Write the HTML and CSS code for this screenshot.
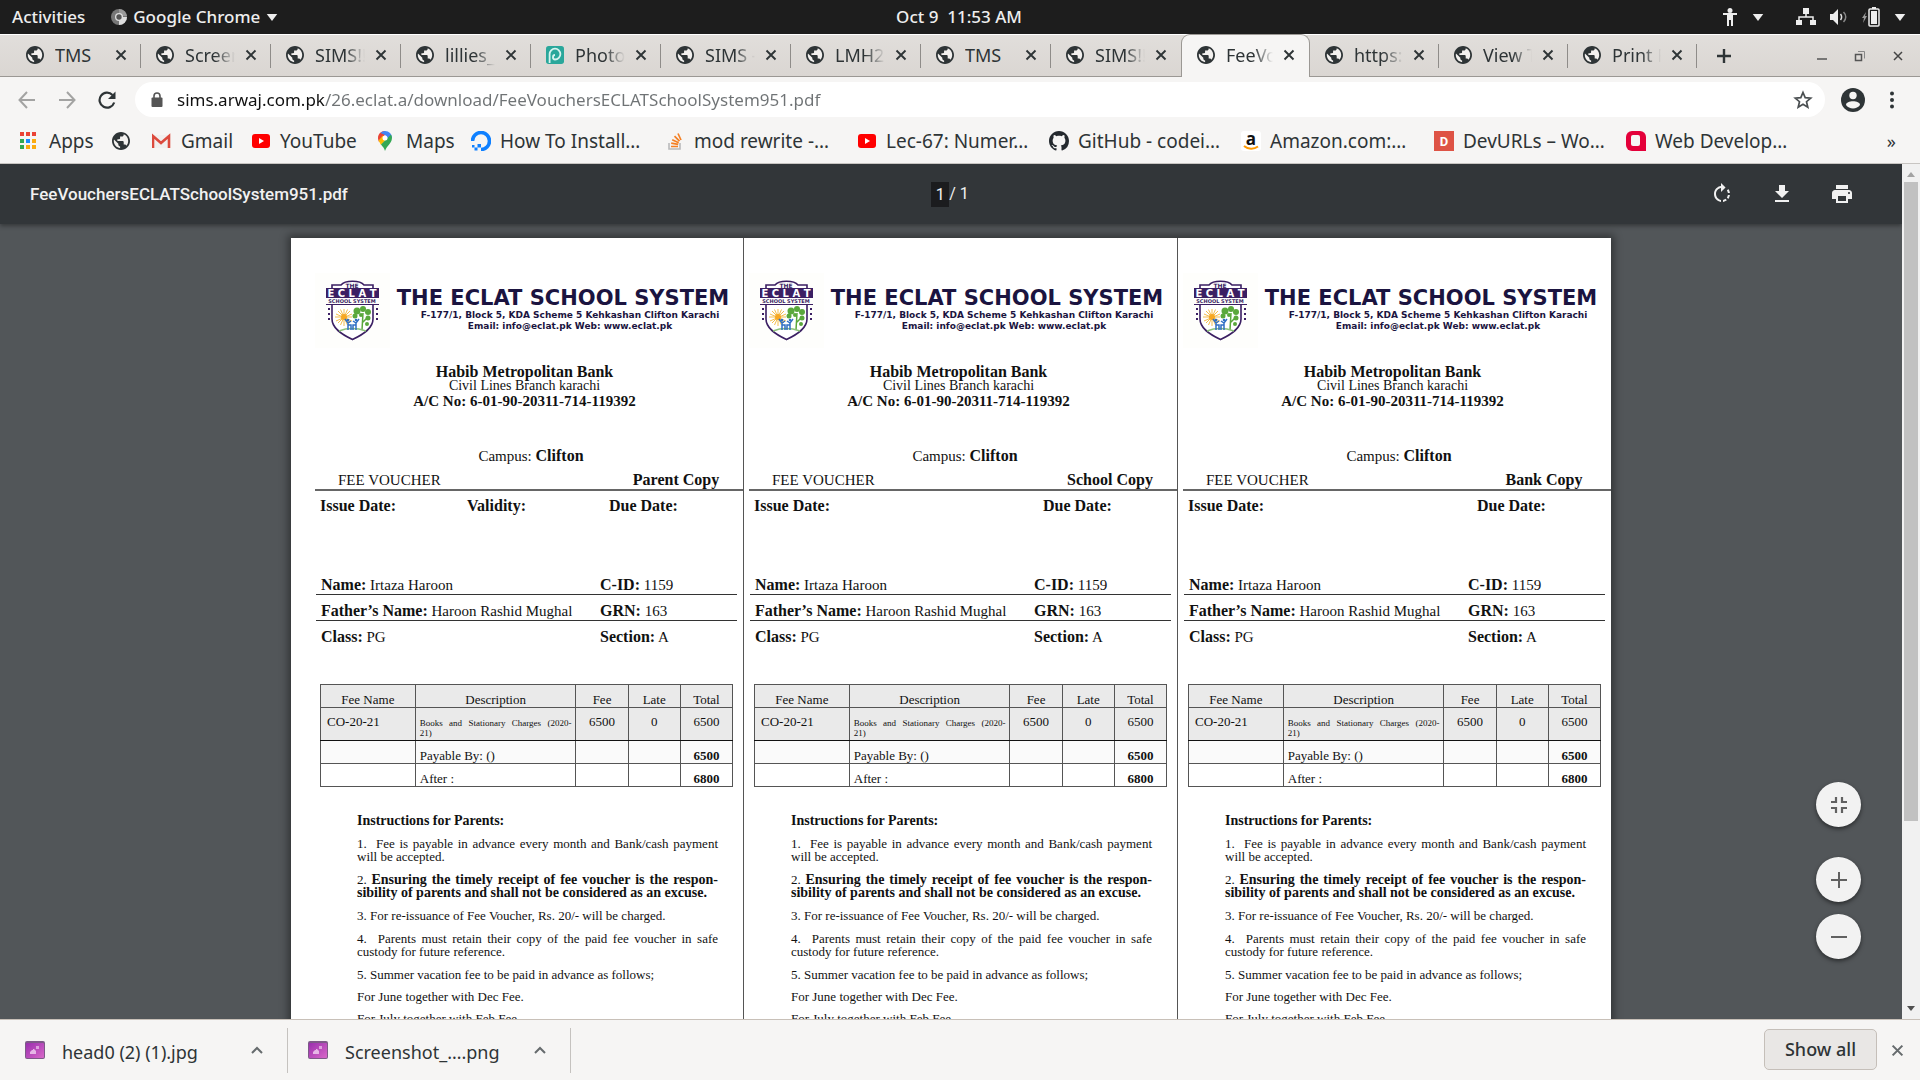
FILE: index.html
```html
<!DOCTYPE html>
<html lang="en">
<head>
<meta charset="utf-8">
<title>FeeVouchersECLATSchoolSystem951.pdf</title>
<link rel="stylesheet" href="styles.css">
</head>
<body>
<svg class="sprite" aria-hidden="true">
  <symbol id="globe" viewBox="2 2 20 20"><circle cx="12" cy="12" r="9" fill="#f3f1ef"/><path fill="#2e3436" d="M12 2C6.480 2 2 6.480 2 12s4.480 10 10 10 10-4.480 10-10S17.520 2 12 2zm-1 17.930c-3.950-.49-7-3.850-7-7.930 0-.62.080-1.210.21-1.790L9 15v1c0 1.100.9 2 2 2v1.930zm6.900-2.540c-.26-.81-1-1.390-1.900-1.390h-1v-3c0-.55-.45-1-1-1H8v-2h2c.55 0 1-.45 1-1V7h2c1.100 0 2-.9 2-2v-.41c2.930 1.190 5 4.060 5 7.410 0 2.080-.8 3.970-2.100 5.390z"/></symbol>
  <symbol id="close" viewBox="0 0 12 12"><path d="M1.500 1.500l9 9m0-9l-9 9" fill="none" stroke="currentColor" stroke-width="1.900"/></symbol>
  <symbol id="caret" viewBox="0 0 12 8"><path d="M0 0h12L6 8z" fill="currentColor"/></symbol>
  <symbol id="chevron" viewBox="0 0 12 8"><path d="M1 7l5-5 5 5" fill="none" stroke="#666b6d" stroke-width="2"/></symbol>
  <symbol id="youtube" viewBox="0 0 20 20"><rect x="1" y="3" width="18" height="14" rx="3" fill="#f00"/><path d="M8 7l5 3-5 3z" fill="#fff"/></symbol>
  <symbol id="image-file" viewBox="0 0 20 20"><defs><linearGradient id="pink" x1="0" x2="1" y1="0" y2="1"><stop offset="0" stop-color="#9a2fae"/><stop offset="1" stop-color="#d868c8"/></linearGradient></defs><rect width="20" height="18" y="1" rx="2" fill="#7d5a88"/><rect x="1" y="3" width="18" height="15" rx="1" fill="url(#pink)"/><path d="M5 14v-2l2-2h1v-1h1l2 2v3z" fill="#e6b6e6"/><path d="M11 6h3v3h-3z" fill="#e6b6e6" opacity=".8"/></symbol>
  <symbol id="crest" viewBox="0 0 75 75">
    <rect width="75" height="75" fill="#fefefc"/>
    <path d="M17 31v15c0 9 9 15 20.500 20.500C49 61 58 55 58 46V31" fill="#fff" stroke="#3b1f63" stroke-width="1.600"/>
    <path d="M17 15v-3h9c4-5 19-5 23 0h9v3" fill="#fff" stroke="#3b1f63" stroke-width="1.600"/>
    <rect x="11" y="15" width="53" height="10" fill="#3b1f63"/>
    <path d="M11 31.500h53" stroke="#3b1f63"/>
    <path d="M14 35v12M62 35v12" stroke="#3b1f63" stroke-width="2" stroke-dasharray="2 3"/>
    <g stroke="#f2b53a" stroke-width=".9"><path d="M29 36v17M20 44h17M23 38l12 12M35 38L23 50M25.500 36.500l7 15.500M32.500 36.500l-7 15.500M21 41l16 7M37 41l-16 7"/></g>
    <circle cx="29" cy="44" r="3" fill="#f7a823"/>
    <g fill="#5aa83c"><circle cx="42" cy="38" r="3.500"/><circle cx="48" cy="36" r="3"/><circle cx="53" cy="39" r="3"/><circle cx="40" cy="43" r="2.500"/><circle cx="53" cy="45" r="2.500"/><circle cx="46" cy="42" r="2"/><circle cx="52" cy="51" r="2"/></g>
    <path d="M48 40l-1 17M47 50l5-5" stroke="#5aa83c" stroke-width="1.500" fill="none"/>
    <path d="M24 58c8-3 18-3 27 0" stroke="#8cc27a" stroke-width="1.500" fill="none"/>
    <g stroke="#2f6fc4" stroke-width="1.500" fill="none"><path d="M30 46l3 4 3-2M33 50v7M36 57v-5h-3M38 48l3 2 3-4M41 50v7M38 57v-5h3"/></g>
    <g fill="#2f6fc4"><circle cx="33" cy="47" r="1.300"/><circle cx="41" cy="47" r="1.300"/></g>
  </symbol>
</svg>

<header class="topbar">
  <div class="topbar-left">
    <button class="plain">Activities</button>
    <button class="plain app-menu">
      <svg width="16" height="18" viewBox="0 0 18 18"><circle cx="9" cy="9" r="9" fill="#777"/><path d="M9 9h9a9 9 0 0 1-9 9z" fill="#ddd"/><path d="M9 0a9 9 0 0 1 9 8H9z" fill="#999"/><circle cx="9" cy="9" r="4.500" fill="#ddd"/><circle cx="9" cy="9" r="3" fill="#555"/></svg>
      Google Chrome <svg width="12" height="7"><use href="#caret"/></svg>
    </button>
  </div>
  <button class="plain clock">Oct 9&nbsp; 11:53 AM</button>
  <div class="topbar-right">
    <button class="plain" aria-label="Accessibility"><svg width="16" height="18" viewBox="0 0 16 18" fill="#eee"><circle cx="8" cy="2.500" r="2.500"/><path d="M1 5h14v2h-4v11H9v-6H7v6H5V7H1z"/></svg><svg width="12" height="7"><use href="#caret"/></svg></button>
    <button class="plain status" aria-label="System menu">
      <svg width="20" height="18" viewBox="0 0 20 18" fill="#eee"><path d="M7 0h6v6H7zM0 12h6v5H0zM14 12h6v5h-6z"/><path d="M10 5v4M3 13V9h14v4" fill="none" stroke="#eee" stroke-width="1.500"/></svg>
      <svg width="18" height="18" viewBox="0 0 18 18"><path d="M0 6h3l5-5v16l-5-5H0z" fill="#eee"/><path d="M10.500 6c1.500 2 1.500 4 0 6" fill="none" stroke="#ddd" stroke-width="1.500"/><path d="M13.500 4c3 3 3 7 0 10" fill="none" stroke="#888" stroke-width="1.500"/></svg>
      <svg width="18" height="20" viewBox="0 0 18 20"><path d="M4 5L0 11h2l-1 5 4-7H3z" fill="#999"/><path d="M10 0h4v2h-4z" fill="#eee"/><rect x="7" y="2" width="10" height="17" rx="1" fill="none" stroke="#eee" stroke-width="1.500"/><path d="M9 4h6v13H9z" fill="#eee"/></svg>
      <svg width="12" height="7"><use href="#caret"/></svg>
    </button>
  </div>
</header>

<nav class="tabs" aria-label="Tabs">
  <div class="tab"><svg class="fav"><use href="#globe"/></svg><button class="tab-title">TMS</button><button class="tab-close" aria-label="Close"><svg><use href="#close"/></svg></button></div>
  <div class="tab"><svg class="fav"><use href="#globe"/></svg><button class="tab-title">Screen</button><button class="tab-close" aria-label="Close"><svg><use href="#close"/></svg></button></div>
  <div class="tab"><svg class="fav"><use href="#globe"/></svg><button class="tab-title">SIMS!!</button><button class="tab-close" aria-label="Close"><svg><use href="#close"/></svg></button></div>
  <div class="tab"><svg class="fav"><use href="#globe"/></svg><button class="tab-title">lillies_</button><button class="tab-close" aria-label="Close"><svg><use href="#close"/></svg></button></div>
  <div class="tab"><svg class="fav" viewBox="0 0 20 20"><rect width="20" height="20" rx="3" fill="#2aa79b"/><path d="M4 19V9a6 6 0 1 1 6 6c-3 0-3-5 0-5" fill="none" stroke="#d8f3ef" stroke-width="2"/></svg><button class="tab-title">Photo</button><button class="tab-close" aria-label="Close"><svg><use href="#close"/></svg></button></div>
  <div class="tab"><svg class="fav"><use href="#globe"/></svg><button class="tab-title">SIMS -</button><button class="tab-close" aria-label="Close"><svg><use href="#close"/></svg></button></div>
  <div class="tab"><svg class="fav"><use href="#globe"/></svg><button class="tab-title">LMH2</button><button class="tab-close" aria-label="Close"><svg><use href="#close"/></svg></button></div>
  <div class="tab"><svg class="fav"><use href="#globe"/></svg><button class="tab-title">TMS</button><button class="tab-close" aria-label="Close"><svg><use href="#close"/></svg></button></div>
  <div class="tab before-active"><svg class="fav"><use href="#globe"/></svg><button class="tab-title">SIMS!!</button><button class="tab-close" aria-label="Close"><svg><use href="#close"/></svg></button></div>
  <div class="tab active"><svg class="fav"><use href="#globe"/></svg><button class="tab-title">FeeVo</button><button class="tab-close" aria-label="Close"><svg><use href="#close"/></svg></button></div>
  <div class="tab"><svg class="fav"><use href="#globe"/></svg><button class="tab-title">https:</button><button class="tab-close" aria-label="Close"><svg><use href="#close"/></svg></button></div>
  <div class="tab"><svg class="fav"><use href="#globe"/></svg><button class="tab-title">View T</button><button class="tab-close" aria-label="Close"><svg><use href="#close"/></svg></button></div>
  <div class="tab"><svg class="fav"><use href="#globe"/></svg><button class="tab-title">Print F</button><button class="tab-close" aria-label="Close"><svg><use href="#close"/></svg></button></div>
  <button class="plain new-tab" aria-label="New tab"><svg width="16" height="16" viewBox="0 0 16 16"><path d="M8 1v14M1 8h14" stroke="#2e3436" stroke-width="2.400"/></svg></button>
  <div class="window-buttons">
    <button class="plain" aria-label="Minimize"><svg width="12" height="12"><path d="M1 9h10" stroke="#555" stroke-width="1.500"/></svg></button>
    <button class="plain" aria-label="Restore"><svg width="12" height="12" fill="none" stroke="#555"><path d="M1.500 4.500h6v6h-6z" stroke-width="1.500"/><path d="M4 1.500h6.500v7" stroke="#888"/></svg></button>
    <button class="plain" aria-label="Close window"><svg width="12" height="12" viewBox="0 0 12 12"><path d="M2 2l8 8m0-8l-8 8" stroke="#444" stroke-width="1.500"/></svg></button>
  </div>
</nav>

<div class="toolbar">
  <button class="plain nav-btn" aria-label="Back"><svg width="18" height="18" viewBox="0 0 18 18"><path d="M17 9H2M9 1L1.500 9 9 17" fill="none" stroke="#a3a3a2" stroke-width="2"/></svg></button>
  <button class="plain nav-btn" aria-label="Forward"><svg width="18" height="18" viewBox="0 0 18 18"><path d="M1 9h15M9 1l7.500 8L9 17" fill="none" stroke="#a3a3a2" stroke-width="2"/></svg></button>
  <button class="plain nav-btn" aria-label="Reload"><svg width="18" height="18" viewBox="0 0 18 18"><path d="M16.200 11.500A7.500 7.500 0 1 1 14.500 4" fill="none" stroke="#2e3436" stroke-width="2.200"/><path d="M17.500.5V8H10z" fill="#2e3436"/></svg></button>
  <div class="omnibox">
    <svg width="12" height="16" viewBox="0 0 12 16"><path d="M3 7V4a3 3 0 0 1 6 0v3" fill="none" stroke="#555" stroke-width="1.600"/><rect x=".5" y="5.500" width="11" height="9.500" rx="1" fill="#555"/></svg>
    <input class="url" type="text" aria-label="Address" value="sims.arwaj.com.pk/26.eclat.a/download/FeeVouchersECLATSchoolSystem951.pdf">
    <button class="plain" aria-label="Bookmark this page"><svg width="20" height="20" viewBox="0 0 20 20"><path d="M10 2.500l2.200 5.200 5.500.4-4.200 3.600 1.300 5.500-4.800-3-4.800 3 1.300-5.500L2.300 8.100l5.500-.4z" fill="none" stroke="#4a4f51" stroke-width="1.700"/></svg></button>
  </div>
  <button class="plain" aria-label="Profile"><svg width="24" height="24" viewBox="0 0 24 24"><circle cx="12" cy="12" r="12" fill="#2e3436"/><circle cx="12" cy="7.500" r="3.700" fill="#f6f5f4"/><path d="M5 17c0-5 14-5 14 0-3 4.500-11 4.500-14 0z" fill="#f6f5f4"/></svg></button>
  <button class="plain menu-btn" aria-label="Menu"><svg width="6" height="18" viewBox="0 0 6 18" fill="#2e3436"><circle cx="3" cy="2.500" r="2"/><circle cx="3" cy="9" r="2"/><circle cx="3" cy="15.500" r="2"/></svg></button>
</div>

<nav class="bookmarks" aria-label="Bookmarks">
  <a href="#"><svg viewBox="0 0 20 20"><path fill="#ea4335" d="M0 1h4v4H0zM6 1h4v4H6zM12 1h4v4h-4z"/><path fill="#34a853" d="M0 8h4v4H0zM0 14h4v4H0z"/><path fill="#1a8cff" d="M6 8h4v4H6z"/><path fill="#fbab10" d="M12 8h4v4h-4zM6 14h4v4H6zM12 14h4v4h-4z"/></svg>Apps</a>
  <a href="#" aria-label="Bookmark"><svg class="fav"><use href="#globe"/></svg></a>
  <a href="#"><svg viewBox="0 0 20 20"><path d="M1 4h16v13H1z" fill="#f1efee"/><path d="M1 17V5l8 7 8-7v12" fill="none" stroke="#dc4a3d" stroke-width="2.600"/></svg>Gmail</a>
  <a href="#"><svg><use href="#youtube"/></svg>YouTube</a>
  <a href="#"><svg viewBox="0 0 20 20"><path d="M8 0C4 0 1 3 1 7c0 1.500.5 2.700 1 4l6-7z" fill="#ea4335"/><path d="M3.500 2C5 .5 7 0 8 0c4 0 7 3 7 7l-4 1-3-4z" fill="#4285f4"/><path d="M1.600 9.500l4.200-5L8 9.500l-4 4.500z" fill="#fbbc04"/><path d="M14 3.500c2 4 .5 7-1.500 9.500S9 17 8 20c-.8-3-2-4-4-6.500z" fill="#34a853"/><circle cx="8" cy="7" r="2.500" fill="#fff"/></svg>Maps</a>
  <a href="#"><svg viewBox="0 0 20 20"><path d="M1.500 10a8.500 8.500 0 1 1 8.500 8.500" fill="none" stroke="#0f80ff" stroke-width="3.600"/><path d="M6.500 13H10v3.500H6.500zM3.500 16.500h3v3h-3zM1 14h2.500v2.500H1z" fill="#0f80ff"/></svg>How To Install…</a>
  <a href="#"><svg viewBox="0 0 20 20"><path d="M4 12v6h11v-6" fill="none" stroke="#b9babb" stroke-width="1.600"/><path d="M6 15.500h7M6.200 12.200l7 1.200M7.200 8.700l6.500 3M9.500 5.200l5 5M13 2.500l3 6.500" stroke="#f48024" stroke-width="1.700"/></svg>mod rewrite -…</a>
  <a href="#"><svg><use href="#youtube"/></svg>Lec-67: Numer…</a>
  <a href="#"><svg viewBox="0 0 16 16"><path fill="#24292e" d="M8 0C3.580 0 0 3.580 0 8c0 3.540 2.290 6.530 5.470 7.590.4.070.55-.17.55-.38 0-.19-.01-.82-.01-1.490-2.010.37-2.530-.49-2.690-.94-.09-.23-.48-.94-.82-1.130-.28-.15-.68-.52-.01-.53.63-.01 1.080.58 1.230.82.72 1.210 1.870.87 2.330.66.070-.52.28-.87.51-1.070-1.780-.2-3.640-.89-3.640-3.950 0-.87.31-1.590.82-2.150-.08-.2-.36-1.020.08-2.120 0 0 .67-.21 2.200.82.64-.18 1.320-.27 2-.27s1.360.09 2 .27c1.530-1.040 2.200-.82 2.200-.82.44 1.100.16 1.920.08 2.120.51.56.82 1.270.82 2.150 0 3.070-1.870 3.750-3.650 3.950.29.25.54.73.54 1.480 0 1.070-.01 1.930-.01 2.200 0 .21.15.46.55.38A8.010 8.010 0 0 0 16 8c0-4.420-3.580-8-8-8z"/></svg>GitHub - codei…</a>
  <a href="#"><svg viewBox="0 0 20 20"><rect width="20" height="20" rx="3" fill="#fff"/><text x="10" y="14" text-anchor="middle" class="amazon-a">a</text><path d="M3 15c4 3.500 10 3.500 14 .5" fill="none" stroke="#ff9900" stroke-width="2"/></svg>Amazon.com:…</a>
  <a href="#"><svg viewBox="0 0 20 20"><rect width="20" height="20" fill="#de5345"/><text x="10" y="15" text-anchor="middle" class="dev-d">D</text></svg>DevURLs – Wo…</a>
  <a href="#"><svg viewBox="0 0 20 20"><path d="M6 0h8a6 6 0 0 1 6 6v14H6a6 6 0 0 1-6-6V6a6 6 0 0 1 6-6z" fill="#e4003a"/><rect x="5" y="4" width="9" height="11" rx="2" fill="#f6f5f4"/></svg>Web Develop…</a>
  <button class="plain more" aria-label="More bookmarks">»</button>
</nav>

<main class="viewer">
  <div class="pdf">
    <div class="pdf-bar">
      <h1>FeeVouchersECLATSchoolSystem951.pdf</h1>
      <div class="pages"><input type="text" value="1" aria-label="Page number"><span>/ 1</span></div>
      <div class="pdf-actions">
        <button class="plain" aria-label="Rotate"><svg width="24" height="24" viewBox="0 0 24 24" fill="#f1f1f1"><path d="M15.550 5.550L11 1v3.070C7.060 4.560 4 7.920 4 12s3.050 7.440 7 7.930v-2.020c-2.840-.48-5-2.940-5-5.910s2.160-5.430 5-5.910V10l4.550-4.450zM19.930 11c-.17-1.390-.72-2.730-1.620-3.890l-1.420 1.420c.54.75.88 1.600 1.020 2.470h2.020zM13 17.900v2.020c1.390-.17 2.740-.71 3.900-1.610l-1.440-1.440c-.75.54-1.590.89-2.460 1.030zm3.890-2.420l1.420 1.410c.9-1.160 1.450-2.500 1.620-3.890h-2.020c-.14.87-.48 1.720-1.020 2.480z"/></svg></button>
        <button class="plain" aria-label="Download"><svg width="24" height="24" viewBox="0 0 24 24" fill="#f1f1f1"><path d="M19 9h-4V3H9v6H5l7 7 7-7zM5 18v2h14v-2H5z"/></svg></button>
        <button class="plain" aria-label="Print"><svg width="24" height="24" viewBox="0 0 24 24" fill="#f1f1f1"><path d="M19 8H5c-1.660 0-3 1.340-3 3v6h4v4h12v-4h4v-6c0-1.660-1.340-3-3-3zm-3 11H8v-5h8v5zm3-7c-.55 0-1-.45-1-1s.45-1 1-1 1 .45 1 1-.45 1-1 1zm-1-9H6v4h12V3z"/></svg></button>
      </div>
    </div>

    <div class="paper">
      <article class="voucher">
        <header class="school"><svg class="crest" viewBox="0 0 75 75"><use href="#crest"/><text x="37" y="15" text-anchor="middle" class="crest-the">THE</text><text x="37" y="24" text-anchor="middle" class="crest-name">E C L A T</text><text x="37" y="30" text-anchor="middle" class="crest-sub">SCHOOL SYSTEM</text></svg><div class="school-text"><h2>THE ECLAT SCHOOL SYSTEM</h2><p>F-177/1, Block 5, KDA Scheme 5 Kehkashan Clifton Karachi<br>Email: info@eclat.pk Web: www.eclat.pk</p></div></header>
        <div class="bank"><b class="bank-name">Habib Metropolitan Bank</b><span>Civil Lines Branch karachi</span><b>A/C No: 6-01-90-20311-714-119392</b></div>
        <p class="campus">Campus: <b>Clifton</b></p>
        <div class="copy"><span>FEE VOUCHER</span><b>Parent Copy</b></div>
        <div class="dates"><b>Issue Date:</b><b>Validity:</b><b>Due Date:</b></div>
        <div class="student"><p><span><b>Name:</b> Irtaza Haroon</span><span><b>C-ID:</b> 1159</span></p><p><span><b>Father’s Name:</b> Haroon Rashid Mughal</span><span><b>GRN:</b> 163</span></p><p><span><b>Class:</b> PG</span><span><b>Section:</b> A</span></p></div>
        <table>
          <thead><tr><th>Fee Name</th><th>Description</th><th>Fee</th><th>Late</th><th>Total</th></tr></thead>
          <tbody>
            <tr class="fee"><td>CO-20-21</td><td><span class="stretch">Books and Stationary Charges (2020-</span>21)</td><td>6500</td><td>0</td><td>6500</td></tr>
            <tr class="due"><td></td><td>Payable By: ()</td><td></td><td></td><td>6500</td></tr>
            <tr class="late"><td></td><td>After :</td><td></td><td></td><td>6800</td></tr>
          </tbody>
        </table>
        <section class="notes">
          <h3>Instructions for Parents:</h3>
          <p><span class="stretch">1.&nbsp; Fee is payable in advance every month and Bank/cash payment</span>will be accepted.</p>
          <p><span class="stretch">2. <b>Ensuring the timely receipt of fee voucher is the respon-</b></span><b>sibility of parents and shall not be considered as an excuse.</b></p>
          <p>3. For re-issuance of Fee Voucher, Rs. 20/- will be charged.</p>
          <p><span class="stretch">4.&nbsp; Parents must retain their copy of the paid fee voucher in safe</span>custody for future reference.</p>
          <p>5. Summer vacation fee to be paid in advance as follows;</p>
          <p>For June together with Dec Fee.</p>
          <p>For July together with Feb Fee.</p>
        </section>
      </article>

      <article class="voucher">
        <header class="school"><svg class="crest" viewBox="0 0 75 75"><use href="#crest"/><text x="37" y="15" text-anchor="middle" class="crest-the">THE</text><text x="37" y="24" text-anchor="middle" class="crest-name">E C L A T</text><text x="37" y="30" text-anchor="middle" class="crest-sub">SCHOOL SYSTEM</text></svg><div class="school-text"><h2>THE ECLAT SCHOOL SYSTEM</h2><p>F-177/1, Block 5, KDA Scheme 5 Kehkashan Clifton Karachi<br>Email: info@eclat.pk Web: www.eclat.pk</p></div></header>
        <div class="bank"><b class="bank-name">Habib Metropolitan Bank</b><span>Civil Lines Branch karachi</span><b>A/C No: 6-01-90-20311-714-119392</b></div>
        <p class="campus">Campus: <b>Clifton</b></p>
        <div class="copy"><span>FEE VOUCHER</span><b>School Copy</b></div>
        <div class="dates"><b>Issue Date:</b><b></b><b>Due Date:</b></div>
        <div class="student"><p><span><b>Name:</b> Irtaza Haroon</span><span><b>C-ID:</b> 1159</span></p><p><span><b>Father’s Name:</b> Haroon Rashid Mughal</span><span><b>GRN:</b> 163</span></p><p><span><b>Class:</b> PG</span><span><b>Section:</b> A</span></p></div>
        <table>
          <thead><tr><th>Fee Name</th><th>Description</th><th>Fee</th><th>Late</th><th>Total</th></tr></thead>
          <tbody>
            <tr class="fee"><td>CO-20-21</td><td><span class="stretch">Books and Stationary Charges (2020-</span>21)</td><td>6500</td><td>0</td><td>6500</td></tr>
            <tr class="due"><td></td><td>Payable By: ()</td><td></td><td></td><td>6500</td></tr>
            <tr class="late"><td></td><td>After :</td><td></td><td></td><td>6800</td></tr>
          </tbody>
        </table>
        <section class="notes">
          <h3>Instructions for Parents:</h3>
          <p><span class="stretch">1.&nbsp; Fee is payable in advance every month and Bank/cash payment</span>will be accepted.</p>
          <p><span class="stretch">2. <b>Ensuring the timely receipt of fee voucher is the respon-</b></span><b>sibility of parents and shall not be considered as an excuse.</b></p>
          <p>3. For re-issuance of Fee Voucher, Rs. 20/- will be charged.</p>
          <p><span class="stretch">4.&nbsp; Parents must retain their copy of the paid fee voucher in safe</span>custody for future reference.</p>
          <p>5. Summer vacation fee to be paid in advance as follows;</p>
          <p>For June together with Dec Fee.</p>
          <p>For July together with Feb Fee.</p>
        </section>
      </article>

      <article class="voucher">
        <header class="school"><svg class="crest" viewBox="0 0 75 75"><use href="#crest"/><text x="37" y="15" text-anchor="middle" class="crest-the">THE</text><text x="37" y="24" text-anchor="middle" class="crest-name">E C L A T</text><text x="37" y="30" text-anchor="middle" class="crest-sub">SCHOOL SYSTEM</text></svg><div class="school-text"><h2>THE ECLAT SCHOOL SYSTEM</h2><p>F-177/1, Block 5, KDA Scheme 5 Kehkashan Clifton Karachi<br>Email: info@eclat.pk Web: www.eclat.pk</p></div></header>
        <div class="bank"><b class="bank-name">Habib Metropolitan Bank</b><span>Civil Lines Branch karachi</span><b>A/C No: 6-01-90-20311-714-119392</b></div>
        <p class="campus">Campus: <b>Clifton</b></p>
        <div class="copy"><span>FEE VOUCHER</span><b>Bank Copy</b></div>
        <div class="dates"><b>Issue Date:</b><b></b><b>Due Date:</b></div>
        <div class="student"><p><span><b>Name:</b> Irtaza Haroon</span><span><b>C-ID:</b> 1159</span></p><p><span><b>Father’s Name:</b> Haroon Rashid Mughal</span><span><b>GRN:</b> 163</span></p><p><span><b>Class:</b> PG</span><span><b>Section:</b> A</span></p></div>
        <table>
          <thead><tr><th>Fee Name</th><th>Description</th><th>Fee</th><th>Late</th><th>Total</th></tr></thead>
          <tbody>
            <tr class="fee"><td>CO-20-21</td><td><span class="stretch">Books and Stationary Charges (2020-</span>21)</td><td>6500</td><td>0</td><td>6500</td></tr>
            <tr class="due"><td></td><td>Payable By: ()</td><td></td><td></td><td>6500</td></tr>
            <tr class="late"><td></td><td>After :</td><td></td><td></td><td>6800</td></tr>
          </tbody>
        </table>
        <section class="notes">
          <h3>Instructions for Parents:</h3>
          <p><span class="stretch">1.&nbsp; Fee is payable in advance every month and Bank/cash payment</span>will be accepted.</p>
          <p><span class="stretch">2. <b>Ensuring the timely receipt of fee voucher is the respon-</b></span><b>sibility of parents and shall not be considered as an excuse.</b></p>
          <p>3. For re-issuance of Fee Voucher, Rs. 20/- will be charged.</p>
          <p><span class="stretch">4.&nbsp; Parents must retain their copy of the paid fee voucher in safe</span>custody for future reference.</p>
          <p>5. Summer vacation fee to be paid in advance as follows;</p>
          <p>For June together with Dec Fee.</p>
          <p>For July together with Feb Fee.</p>
        </section>
      </article>
    </div>

    <div class="zoom">
      <button class="fit" aria-label="Fit to page"><svg width="16" height="16" viewBox="0 0 16 16"><path d="M5 0v5H0M11 0v5h5M5 16v-5H0M11 16v-5h5" fill="none" stroke="#616161" stroke-width="2.200"/></svg></button>
      <button aria-label="Zoom in"><svg width="16" height="16" viewBox="0 0 16 16"><path d="M8 0v16M0 8h16" stroke="#616161" stroke-width="2"/></svg></button>
      <button aria-label="Zoom out"><svg width="16" height="16" viewBox="0 0 16 16"><path d="M0 8h16" stroke="#616161" stroke-width="2"/></svg></button>
    </div>
  </div>
  <div class="scrollbar">
    <svg width="8" height="5" viewBox="0 0 8 5"><path d="M4 0l4 5H0z" fill="#a3a3a3"/></svg>
    <div class="track"><div class="thumb"></div></div>
    <svg width="8" height="5" viewBox="0 0 8 5"><path d="M0 0h8L4 5z" fill="#505050"/></svg>
  </div>
</main>

<footer class="downloads">
  <div class="download"><svg class="file-icon"><use href="#image-file"/></svg><button class="plain file-name">head0 (2) (1).jpg</button><button class="plain chev" aria-label="Options"><svg width="12" height="8"><use href="#chevron"/></svg></button></div>
  <div class="download"><svg class="file-icon"><use href="#image-file"/></svg><button class="plain file-name">Screenshot_….png</button><button class="plain chev" aria-label="Options"><svg width="12" height="8"><use href="#chevron"/></svg></button></div>
  <button class="show-all">Show all</button>
  <button class="plain shelf-close" aria-label="Close downloads bar"><svg width="13" height="13"><use href="#close"/></svg></button>
</footer>
</body>
</html>
```
FILE: styles.css
```css
* { box-sizing: border-box; }

body {
  margin: 0;
  height: 100vh;
  display: flex;
  flex-direction: column;
  overflow: hidden;
  font: 18px/24px "Noto Sans", "Open Sans", sans-serif;
  color: #2e3436;
  background: #f6f5f4;
}

h1, h2, h3, p { margin: 0; }
button, input { font: inherit; color: inherit; }
svg { display: block; flex: none; }
.sprite { width: 0; height: 0; position: absolute; }

.plain {
  display: flex;
  align-items: center;
  border: 0;
  padding: 0;
  background: none;
}

/* Desktop top bar */
.topbar {
  flex: none;
  height: 34px;
  display: grid;
  grid-template-columns: 1fr auto 1fr;
  align-items: center;
  padding: 0 14px 0 12px;
  background: #1d1d1d;
  color: #eee;
  font-size: 17px;
  font-weight: 500;
}
.topbar-left, .topbar-right { display: flex; gap: 26px; }
.topbar-right { justify-content: flex-end; gap: 32px; }
.topbar .plain { gap: 6px; }
.topbar-right .plain { gap: 14px; }

/* Tab strip */
.tabs {
  flex: none;
  height: 43px;
  display: flex;
  padding-left: 11px;
  border-top: 1px solid #fff;
  background: linear-gradient(#e1dedb, #dad6d2);
  box-shadow: inset 0 -1px #9b9894;
}
.tab {
  flex: 0 1 130px;
  min-width: 0;
  display: flex;
  align-items: center;
  padding: 0 14px 2px 15px;
  background: linear-gradient(#8f8c89, #8f8c89) right 0 top 9px / 1px 24px no-repeat;
}
.tab:nth-child(n+10) { flex-basis: 129px; }
.fav { width: 20px; height: 20px; }
.tab .fav { width: 18px; height: 18px; }
.tab-title {
  flex: 1;
  min-width: 0;
  margin-left: 11px;
  border: 0;
  padding: 0;
  background: none;
  overflow: hidden;
  white-space: nowrap;
  text-align: left;
  -webkit-mask-image: linear-gradient(90deg, #000 60%, transparent);
  mask-image: linear-gradient(90deg, #000 60%, transparent);
}
.tab-close {
  width: 22px;
  border: 0;
  padding: 0 0 0 10px;
  background: none;
}
.tab-close svg { width: 12px; height: 12px; }
.tab:first-child .tab-title, .tab:nth-child(8) .tab-title { -webkit-mask: none; mask: none; }
.tab.before-active { background: none; }
.tab.active {
  height: 43px;
  margin-top: -1px;
  border: 1px solid #9b9894;
  border-bottom: 0;
  border-radius: 9px 9px 0 0;
  background: #f6f5f4;
}
.new-tab { margin-left: 19px; }
.window-buttons {
  margin-left: auto;
  display: flex;
  gap: 26px;
  padding-right: 16px;
}

/* Address bar row */
.toolbar {
  flex: none;
  height: 45px;
  display: flex;
  align-items: center;
  padding: 0 25px 0 18px;
}
.nav-btn { width: 40px; }
.nav-btn:nth-child(3) { width: 37px; }
.omnibox {
  flex: 1;
  height: 35px;
  display: flex;
  align-items: center;
  margin-right: 16px;
  padding: 0 12px 0 16px;
  border-radius: 18px;
  background: #fff;
}
.url {
  flex: 1;
  height: 35px;
  margin-left: 14px;
  border: 0;
  padding: 0;
  outline: 0;
  font-size: 17px;
  background: linear-gradient(90deg, #111 148px, #6f7375 148px);
  -webkit-background-clip: text;
  background-clip: text;
  color: transparent;
}
.menu-btn { margin-left: 24px; }

/* Bookmarks */
.bookmarks {
  flex: none;
  height: 42px;
  display: grid;
  grid-template-columns: 92px 40px 99px 126px 94px 194px 192px 192px 192px 193px 192px 1fr auto;
  align-items: center;
  padding: 0 24px 4px 20px;
  border-bottom: 1px solid #c8c5c2;
}
.bookmarks a {
  display: flex;
  align-items: center;
  gap: 9px;
  color: inherit;
  font-size: 19px;
  text-decoration: none;
  white-space: nowrap;
}
.bookmarks a svg { width: 20px; height: 20px; }
.bookmarks a .fav { width: 18px; height: 18px; }
.amazon-a { font: bold 17px "Open Sans", sans-serif; fill: #111; }
.dev-d { font: bold 13px Roboto, sans-serif; fill: #fff; }

/* PDF viewer */
.viewer {
  flex: 1;
  min-height: 0;
  display: flex;
  background: #525659;
}
.pdf {
  flex: 1;
  min-width: 0;
  position: relative;
  overflow: hidden;
}
.pdf-bar {
  position: relative;
  height: 60px;
  display: grid;
  grid-template-columns: 1fr auto 1fr;
  align-items: center;
  padding: 0 48px 0 30px;
  background: #323639;
  box-shadow: 0 2px 4px rgba(0, 0, 0, .35);
  color: #f1f1f1;
  font-family: Roboto, sans-serif;
}
.pdf-bar h1 { font-size: 17px; font-weight: 500; }
.pages { display: flex; align-items: center; padding-left: 16px; font-size: 16px; }
.pages input {
  width: 18px;
  height: 25px;
  border: 0;
  padding: 0;
  text-align: center;
  background: #1b1c1e;
}
.pdf-actions { display: flex; justify-content: flex-end; gap: 36px; }

.zoom {
  position: absolute;
  right: 41px;
  bottom: 60px;
  display: flex;
  flex-direction: column;
  gap: 12px;
}
.zoom button {
  width: 45px;
  height: 45px;
  display: grid;
  place-items: center;
  border: 0;
  border-radius: 50%;
  background: #f2f2f2;
  box-shadow: 0 2px 4px rgba(0, 0, 0, .5);
}
.zoom .fit { margin-bottom: 18px; }

.scrollbar {
  width: 18px;
  display: flex;
  flex-direction: column;
  align-items: center;
  padding: 8px 0;
  background: #f1f1f1;
}
.track { flex: 1; width: 14px; padding: 5px 0; }
.thumb { height: 78%; background: #c1c1c1; }

/* Printed sheet */
.paper {
  max-width: 1320px;
  margin: 14px auto 0;
  display: grid;
  grid-template-columns: 453fr 434fr 433fr;
  background: #fff;
  box-shadow: 0 0 8px 3px rgba(0, 0, 0, .4);
  color: #111;
  font: 15px/18px "Liberation Serif", serif;
}
.voucher { padding: 35px 0 16px; border-right: 1px solid #555; }
.voucher:first-child { padding-left: 19px; }
.voucher:last-child { border-right: 0; }
.voucher b { font-size: 16px; }

.school {
  display: flex;
  padding: 0 7px 0 5px;
  color: #1b1440;
  font-family: "DejaVu Sans", sans-serif;
  font-weight: bold;
  text-align: center;
  white-space: nowrap;
}
.crest { width: 75px; height: 75px; }
.crest-the { font: bold 6px "DejaVu Sans", sans-serif; fill: #3b1f63; }
.crest-name { font: bold 10px "DejaVu Sans", sans-serif; fill: #fff; }
.crest-sub { font: bold 5px "DejaVu Sans", sans-serif; fill: #3b1f63; }
.school-text { flex: 1; padding-top: 13px; }
.school h2 { font-size: 21px; line-height: 24px; }
.school p { padding-left: 14px; font-size: 9px; line-height: 11px; }

.bank {
  display: flex;
  flex-direction: column;
  margin-top: 17px;
  padding-right: 4px;
  text-align: center;
  line-height: 14px;
}
.bank span { font-size: 14px; }
.bank b { font-size: 15px; line-height: 16px; }
.bank .bank-name { font-size: 16px; line-height: 14px; }
.campus { margin-top: 38px; padding-left: 9px; text-align: center; }

.copy {
  display: grid;
  grid-template-columns: 1fr 134px;
  margin: 6px 0 0 5px;
  padding-left: 23px;
  border-bottom: 2px solid #666;
}
.copy b { text-align: center; }
.dates {
  display: grid;
  grid-template-columns: 147px 142px 1fr;
  margin-top: 6px;
  padding-left: 10px;
}
.student { margin: 54px 6px 0; }
.student p {
  height: 26px;
  display: grid;
  grid-template-columns: 279px 1fr;
  padding: 7px 0 0 5px;
  border-bottom: 1px solid #333;
}
.student p:last-child { border-bottom: 0; }
.student p, .student b { white-space: nowrap; }

.voucher table {
  width: calc(100% - 20px);
  margin: 37px 10px 0;
  table-layout: fixed;
  border-collapse: collapse;
  font-size: 13px;
  line-height: 14px;
}
th, td {
  border: 1px solid #555;
  padding: 8px 4px 0;
  font-weight: normal;
  text-align: center;
  vertical-align: top;
}
th:nth-child(1) { width: 23%; }
th:nth-child(2) { width: 39%; }
th, .fee td { background: #eaeaea; }
td:nth-child(2) { text-align: left; }
thead tr { height: 23px; }
.fee { height: 33px; }
.fee td { padding-top: 7px; border-bottom-color: #111; }
.fee td:nth-child(1) { text-align: left; padding-left: 6px; }
.fee td:nth-child(2) { padding-top: 10px; font-size: 9px; line-height: 10px; }
.due { height: 23px; background: #fafafa; }
.late { height: 23px; }
.due td:last-child, .late td:last-child { font-weight: bold; }

.stretch { display: block; text-align: justify; text-align-last: justify; white-space: nowrap; }
.notes {
  margin-top: 27px;
  padding: 0 25px 0 47px;
  font-size: 13px;
  line-height: 13px;
}
.notes h3, .voucher .notes b { font-size: 14px; line-height: 13px; }
.notes b { white-space: nowrap; }
.notes p { margin-top: 10px; }
.notes p:nth-last-of-type(-n+2) { margin-top: 9px; }

/* Download shelf */
.downloads {
  flex: none;
  height: 61px;
  display: flex;
  align-items: center;
  padding: 0 16px 0 0;
  border-top: 1px solid #c8c0b8;
  background: #f6f5f4;
}
.download {
  width: 283px;
  height: 45px;
  display: flex;
  align-items: center;
  padding: 0 24px 0 20px;
  border-right: 1px solid #c5c2bf;
}
.download:first-child { width: 288px; padding-left: 25px; }
.file-icon { width: 20px; height: 20px; }
.file-name { margin: 0 auto 0 17px; padding-top: 4px; }
.show-all {
  height: 41px;
  margin-left: auto;
  margin-bottom: 2px;
  padding: 0 20px;
  border: 1px solid #c5bfb9;
  border-radius: 5px;
  background: #e9e7e5;
  font-size: 18px;
  font-weight: 500;
  color: #2e3436;
}
.shelf-close { margin-left: 14px; color: #666b6d; }
```
